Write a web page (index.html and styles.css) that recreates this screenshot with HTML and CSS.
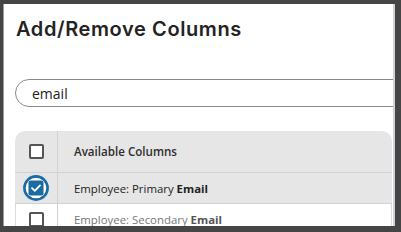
FILE: index.html
```html
<!DOCTYPE html>
<html>
<head>
<meta charset="utf-8">
<link rel="stylesheet" href="styles.css">
</head>
<body>
<div class="window">
  <div class="content">
    <h1 class="title">Add/Remove Columns</h1>
    <div class="search"><span class="search-text">email</span></div>
    <div class="table">
      <div class="row head">
        <div class="cell check"><span class="box"></span></div>
        <div class="cell label"><span>Available Columns</span></div>
      </div>
      <div class="row selected">
        <div class="cell check">
          <svg class="checked" width="26" height="26" viewBox="0 0 26 26">
            <circle cx="13" cy="13" r="11.6" fill="#fff" stroke="#1a6aa4" stroke-width="2.6"/>
            <rect x="5.5" y="5.5" width="15" height="15" rx="2" fill="#1a6aa4"/>
            <polyline points="9,13.2 11.8,15.9 17,10.4" fill="none" stroke="#fff" stroke-width="1.8" stroke-linecap="round" stroke-linejoin="round"/>
          </svg>
        </div>
        <div class="cell label"><span>Employee: Primary <b>Email</b></span></div>
      </div>
      <div class="row plain">
        <div class="cell check"><span class="box"></span></div>
        <div class="cell label"><span>Employee: Secondary <b>Email</b></span></div>
      </div>
    </div>
  </div>
  <div class="scrollbar"></div>
</div>
</body>
</html>
```
FILE: styles.css
```css
html, body {
  margin: 0;
  padding: 0;
}
body {
  width: 401px;
  height: 232px;
  overflow: hidden;
  background: #454545;
}
.window {
  margin: 4px 6px 6px 3px;
  height: 222px;
  background: #fff;
  border-left: 1px solid #9c9c9c;
  display: flex;
  box-sizing: border-box;
}
.content {
  flex: 1;
  overflow: hidden;
  padding: 0 1px 0 11px;
  min-width: 0;
}
.scrollbar {
  width: 2px;
  background: #cfd2da;
}
.title {
  margin: 14px 0 0 1px;
  font-family: Inter, "Noto Sans", sans-serif;
  font-weight: 600;
  font-size: 20px;
  line-height: 22px;
  letter-spacing: 0.6px;
  color: #232323;
}
.search {
  margin-top: 39px;
  margin-right: -40px;
  height: 28px;
  box-sizing: border-box;
  border: 1px solid #8a8a8a;
  border-radius: 14px;
  display: flex;
  align-items: center;
  padding-left: 16px;
}
.search-text {
  font-family: "Open Sans", sans-serif;
  font-size: 14px;
  color: #222;
}
.table {
  margin-top: 24px;
  font-family: "Open Sans", sans-serif;
  font-size: 11.4px;
}
.row {
  display: grid;
  grid-template-columns: 43px 1fr;
  border-bottom: 1px solid #d2d2d2;
  box-sizing: border-box;
}
.head {
  height: 42px;
  background: #e6e6e6;
  border-radius: 10px 10px 0 0;
  font-weight: 600;
  font-size: 11.6px;
  color: #2e2e2e;
}
.selected {
  height: 31px;
  background: #e6e6e6;
  color: #222;
}
.plain {
  height: 31px;
  background: #fff;
  color: #777;
  border-left: 1px solid #dcdcdc;
  border-right: 1px solid #dcdcdc;
  grid-template-columns: 42px 1fr;
}
.cell {
  display: flex;
  align-items: center;
  box-sizing: border-box;
}
.check {
  justify-content: center;
  border-right: 1px solid #d2d2d2;
}
.label {
  padding-left: 16px;
  white-space: nowrap;
}
.label b {
  font-weight: 700;
  color: #222;
}
.plain .label b {
  color: #555;
}
.box {
  width: 15px;
  height: 15px;
  box-sizing: border-box;
  border: 2px solid #555;
  border-radius: 2px;
  background: #fff;
}
.checked {
  display: block;
}
```
